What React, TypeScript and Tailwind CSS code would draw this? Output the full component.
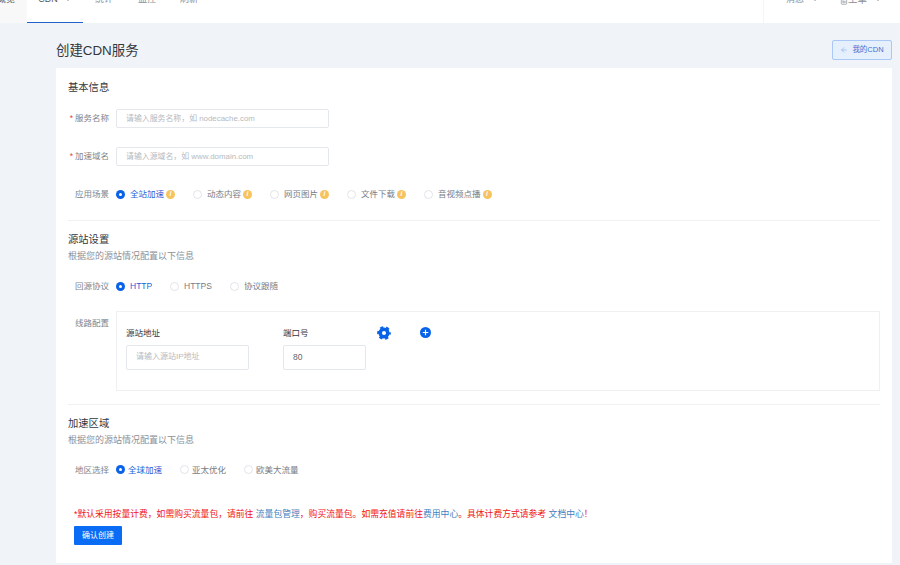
import { ArrowLeft, ChevronDown, FileText } from 'lucide-react';

const font = { fontFamily: '"Liberation Sans", "Noto Sans CJK SC", sans-serif' };

function Tip() {
  return (
    <span className="ml-[2px] flex h-[9px] w-[9px] items-center justify-center rounded-full bg-[#f7c35f] text-[6.5px] font-bold italic leading-none text-white">
      i
    </span>
  );
}

function Radio({ label, checked, tip, tight, className }: { label: string; checked?: boolean; tip?: boolean; tight?: boolean; className: string }) {
  return (
    <div className={`flex items-center ${className}`}>
      {checked ? (
        <span className="flex h-[9px] w-[9px] items-center justify-center rounded-full bg-[#0a62e8]">
          <span className="h-[3px] w-[3px] rounded-full bg-white" />
        </span>
      ) : (
        <span className="h-[9px] w-[9px] rounded-full border border-[#e2e4e8] bg-white" />
      )}
      <span className={`${tight ? 'ml-[3px]' : 'ml-[5px]'} text-[8.5px] ${checked ? 'text-[#1f5fd6]' : 'text-[#777c85]'}`}>{label}</span>
      {tip && <Tip />}
    </div>
  );
}

function Label({ text, required }: { text: string; required?: boolean }) {
  return (
    <div className="w-[48px] pr-[7px] text-right text-[8.5px] leading-none text-[#80858e]">
      {required && <span className="mr-[2px] text-[#e2483d]">*</span>}
      {text}
    </div>
  );
}

function Field({ label, placeholder, className }: { label: string; placeholder: string; className: string }) {
  return (
    <div className={`ml-[12px] flex items-center ${className}`}>
      <Label text={label} required />
      <div className="flex h-[19px] w-[213px] items-center rounded-[2px] border border-[#e4e7eb] pl-[9px] text-[7.9px] text-[#b6bac1]">
        {placeholder}
      </div>
    </div>
  );
}

function Section({ title, sub, className }: { title: string; sub?: string; className: string }) {
  return (
    <div className={className}>
      <div className="text-[10.3px] leading-[14px] text-[#33373d]">{title}</div>
      {sub && <div className="mt-[3px] text-[9px] leading-[12px] text-[#8b9098]">{sub}</div>}
    </div>
  );
}

export default function App() {
  return (
    <div style={font} className="flex h-[565px] w-[900px] flex-col overflow-hidden bg-[#f0f3f7]">
      {/* Header, page is scrolled so the top is cut */}
      <div className="flex h-[23px] shrink-0 items-start justify-between overflow-hidden bg-white text-[9px] leading-none text-[#8b8f96]">
        <div className="flex h-full items-start">
          <div className="flex h-full w-[27px] justify-end bg-[#f8f8f8] pr-[12px] text-[#666]"><span className="-mt-[5px] block whitespace-nowrap">概览</span></div>
          <div className="flex h-full w-[56px] justify-center gap-[6px] border-b border-[#1f62c8] text-[#555]">
            <span className="-mt-[5px] block">CDN</span>
            <ChevronDown size={8} className="-mt-[4px] text-[#aaa]" />
          </div>
          <span className="-mt-[5px] ml-[12px] block">统计</span>
          <span className="-mt-[5px] ml-[25px] block">监控</span>
          <span className="-mt-[5px] ml-[24px] block">刷新</span>
        </div>
        <div className="flex h-full w-[137px] items-start border-l border-[#f3f4f6] pl-[22px]">
          <span className="-mt-[5px] block">消息</span>
          <ChevronDown size={8} className="-mt-[4px] ml-[7px] text-[#aaa]" />
          <FileText size={8} className="-mt-[3px] ml-[21px]" />
          <span className="-mt-[5px] block text-[9.5px]">工单</span>
          <ChevronDown size={8} className="-mt-[4px] ml-[7px] text-[#aaa]" />
        </div>
      </div>

      {/* Page title */}
      <div className="flex h-[45px] shrink-0 items-start justify-between pl-[56px] pr-[8px]">
        <div className="mt-[19px] text-[13.4px] leading-[18px] text-[#33373d]">创建CDN服务</div>
        <div className="mt-[17px] flex h-[20px] w-[60px] items-center justify-center rounded-[2px] border border-[#a9c8f5] bg-[#e6f0fd] text-[7.5px] text-[#3f6fd0]">
          <ArrowLeft size={8} className="mr-[4px] text-[#8fb0e8]" />
          我的CDN
        </div>
      </div>

      {/* Form card */}
      <div className="ml-[56px] mr-[8px] h-[495px] shrink-0 bg-white pt-[13px]">
        <Section title="基本信息" className="ml-[12px]" />
        <Field label="服务名称" placeholder="请输入服务名称，如 nodecache.com" className="mt-[14px]" />
        <Field label="加速域名" placeholder="请输入源域名，如 www.domain.com" className="mt-[19px]" />

        <div className="ml-[12px] mt-[22px] flex items-center">
          <Label text="应用场景" />
          <Radio label="全站加速" checked tip className="w-[77px]" />
          <Radio label="动态内容" tip className="w-[77px]" />
          <Radio label="网页图片" tip className="w-[77px]" />
          <Radio label="文件下载" tip className="w-[77px]" />
          <Radio label="音视频点播" tip className="w-[77px]" />
        </div>

        <div className="ml-[12px] mr-[12px] mt-[19px] border-t border-[#f0f1f3]" />

        <Section title="源站设置" sub="根据您的源站情况配置以下信息" className="ml-[12px] mt-[12px]" />

        <div className="ml-[12px] mt-[18px] flex items-center">
          <Label text="回源协议" />
          <Radio label="HTTP" checked className="w-[54px]" />
          <Radio label="HTTPS" className="w-[60px]" />
          <Radio label="协议跟随" className="w-[70px]" />
        </div>

        <div className="ml-[12px] mt-[18px] flex items-start">
          <div className="pt-[8px]"><Label text="线路配置" /></div>
          <div className="flex h-[80px] w-[764px] items-start border border-[#eef0f2] pl-[9px] pt-[15px]">
            <div className="w-[157px]">
              <div className="text-[8.5px] leading-[12px] text-[#33373d]">源站地址</div>
              <div className="mt-[6px] flex h-[25px] w-[123px] items-center rounded-[2px] border border-[#e4e7eb] pl-[9px] text-[8px] text-[#b6bac1]">请输入源站IP地址</div>
            </div>
            <div className="w-[83px]">
              <div className="text-[8.5px] leading-[12px] text-[#33373d]">端口号</div>
              <div className="mt-[6px] flex h-[25px] w-[83px] items-center rounded-[2px] border border-[#e4e7eb] pl-[9px] text-[8.5px] text-[#666]">80</div>
            </div>
            {/* chunky cog: ring plus a dashed outer ring for the teeth */}
            <svg viewBox="0 0 24 24" className="ml-[11px] -mt-[1px] h-[14px] w-[14px]" fill="none" stroke="#0a62e8">
              <circle cx="12" cy="12" r="6.5" strokeWidth="6" />
              <circle cx="12" cy="12" r="10" strokeWidth="3.5" strokeDasharray="5.5 4.97" strokeDashoffset="2.7" />
            </svg>
            <svg viewBox="0 0 24 24" className="ml-[29px] h-[11px] w-[11px]">
              <circle cx="12" cy="12" r="12" fill="#0a62e8" />
              <path d="M12 6v12M6 12h12" stroke="#fff" strokeWidth="2.5" />
            </svg>
          </div>
        </div>

        <div className="ml-[12px] mr-[12px] mt-[13px] border-t border-[#f0f1f3]" />

        <Section title="加速区域" sub="根据您的源站情况配置以下信息" className="ml-[12px] mt-[12px]" />

        <div className="ml-[12px] mt-[18px] flex items-center">
          <Label text="地区选择" />
          <Radio label="全球加速" checked tight className="w-[64px]" />
          <Radio label="亚太优化" tight className="w-[64px]" />
          <Radio label="欧美大流量" tight className="w-[70px]" />
        </div>

        <div className="ml-[18px] mt-[32px] text-[8.8px] leading-[12px] text-[#f01414]">
          *默认采用按量计费，如需购买流量包，请前往 <span className="text-[#3f7fc0]">流量包管理</span>，购买流量包。如需充值请前往<span className="text-[#3f7fc0]">费用中心</span>。具体计费方式请参考 <span className="text-[#3f7fc0]">文档中心</span>！
        </div>
        <div className="ml-[18px] mt-[6px] flex h-[19px] w-[48px] items-center justify-center rounded-[1px] bg-[#0a6cf5] text-[8px] text-white">确认创建</div>
      </div>
    </div>
  );
}
